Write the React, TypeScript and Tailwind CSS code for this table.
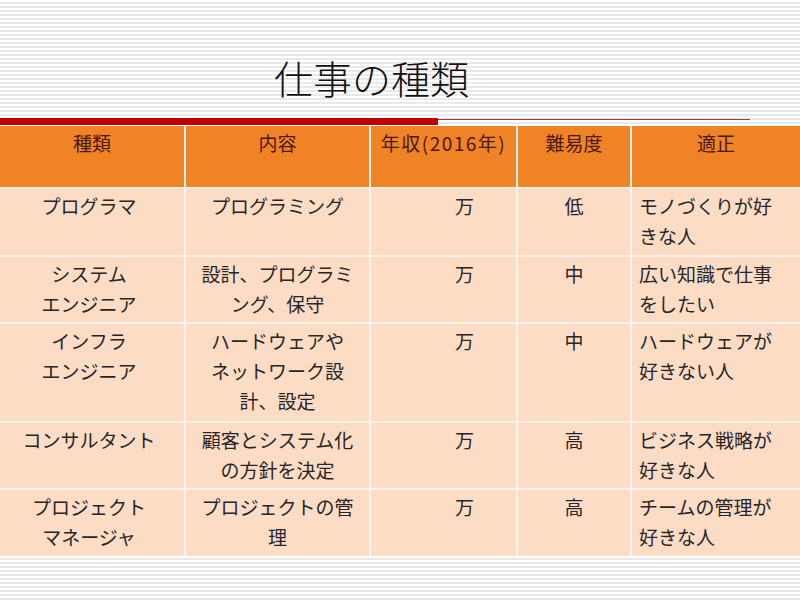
import React from 'react';

type Row = {
  h: string;
  name: React.ReactNode;
  work: React.ReactNode;
  level: string;
  fit: React.ReactNode;
};

const rows: Row[] = [
  {
    h: 'h-[66px]',
    name: 'プログラマ',
    work: 'プログラミング',
    level: '低',
    fit: (<>モノづくりが好<br />きな人</>),
  },
  {
    h: 'h-[65px]',
    name: (<>システム<br />エンジニア</>),
    work: (<>設計、プログラミ<br />ング、保守</>),
    level: '中',
    fit: (<>広い知識で仕事<br />をしたい</>),
  },
  {
    h: 'h-[97px]',
    name: (<>インフラ<br />エンジニア</>),
    work: (<>ハードウェアや<br />ネットワーク設<br />計、設定</>),
    level: '中',
    fit: (<>ハードウェアが<br />好きない人</>),
  },
  {
    h: 'h-[65px]',
    name: 'コンサルタント',
    work: (<>顧客とシステム化<br />の方針を決定</>),
    level: '高',
    fit: (<>ビジネス戦略が<br />好きな人</>),
  },
  {
    h: 'h-[66px]',
    name: (<>プロジェクト<br />マネージャ</>),
    work: (<>プロジェクトの管<br />理</>),
    level: '高',
    fit: (<>チームの管理が<br />好きな人</>),
  },
];

const headers = ['種類', '内容', '年収(2016年)', '難易度', '適正'];

export default function App() {
  return (
    <div
      className="w-[800px] h-[600px] overflow-hidden bg-[repeating-linear-gradient(to_bottom,#ffffff_0px,#ffffff_2px,#e9e9e9_2px,#e9e9e9_4px)]"
      style={{ fontFamily: '"Noto Sans CJK JP", "Noto Sans", sans-serif' }}
    >
      {/* title */}
      <div className="h-[118px] pl-[274px] pt-[58px]">
        <h1 className="text-[39px] leading-[39px] font-light text-[#111]">
          仕事の種類
        </h1>
      </div>

      {/* red rule */}
      <div className="flex items-start h-[8px]">
        <div className="w-[438px] h-[7px] bg-[#c00000]" />
        <div className="w-[312px] h-px mt-px bg-[#9c3a3a]" />
      </div>

      {/* table */}
      <div className="grid grid-cols-[184px_183px_145px_112px_168px] gap-[2px] bg-[#fff2ea] text-[19px] leading-[30px]">
        {headers.map((t, i) => (
          <div
            key={t}
            className={
              i === 2
                ? 'h-[61px] bg-[#f08326] text-[#4a170a] text-center pt-[2px] whitespace-nowrap tracking-[1.5px]'
                : 'h-[61px] bg-[#f08326] text-[#4a170a] text-center pt-[2px] whitespace-nowrap'
            }
          >
            {t}
          </div>
        ))}
        {rows.map((r, i) => (
          <React.Fragment key={i}>
            <div className={`${r.h} bg-[#fddcc6] text-[#262626] text-center pt-[2px] pr-[6px] whitespace-nowrap`}>
              {r.name}
            </div>
            <div className={`${r.h} bg-[#fddcc6] text-[#262626] text-center pt-[2px] whitespace-nowrap`}>
              {r.work}
            </div>
            <div className={`${r.h} bg-[#fddcc6] text-[#262626] pl-[84px] pt-[2px]`}>万</div>
            <div className={`${r.h} bg-[#fddcc6] text-[#262626] text-center pt-[2px]`}>
              {r.level}
            </div>
            <div className={`${r.h} bg-[#fddcc6] text-[#262626] pl-[7px] pt-[2px] whitespace-nowrap`}>
              {r.fit}
            </div>
          </React.Fragment>
        ))}
      </div>
    </div>
  );
}
